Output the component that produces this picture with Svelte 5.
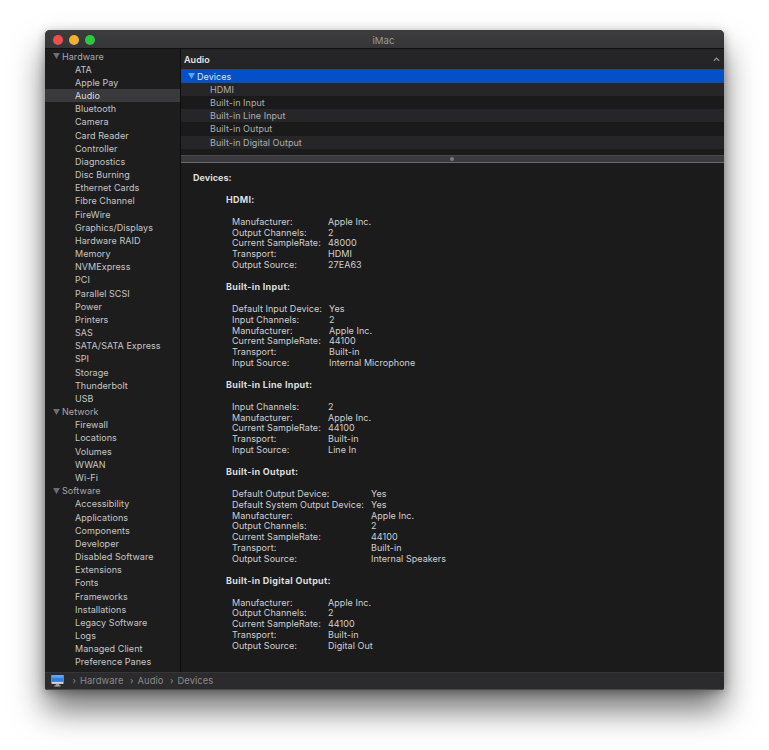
<script lang="ts">
  const sidebar = [
    { title: "Hardware", items: ["ATA", "Apple Pay", "Audio", "Bluetooth", "Camera", "Card Reader", "Controller", "Diagnostics", "Disc Burning", "Ethernet Cards", "Fibre Channel", "FireWire", "Graphics/Displays", "Hardware RAID", "Memory", "NVMExpress", "PCI", "Parallel SCSI", "Power", "Printers", "SAS", "SATA/SATA Express", "SPI", "Storage", "Thunderbolt", "USB"] },
    { title: "Network", items: ["Firewall", "Locations", "Volumes", "WWAN", "Wi-Fi"] },
    { title: "Software", items: ["Accessibility", "Applications", "Components", "Developer", "Disabled Software", "Extensions", "Fonts", "Frameworks", "Installations", "Legacy Software", "Logs", "Managed Client", "Preference Panes", "Printer Software"] }
  ];

  const devices = ["HDMI", "Built-in Input", "Built-in Line Input", "Built-in Output", "Built-in Digital Output"];

  const details = [
    { name: "HDMI", col: "col-a", rows: [["Manufacturer", "Apple Inc."], ["Output Channels", "2"], ["Current SampleRate", "48000"], ["Transport", "HDMI"], ["Output Source", "27EA63"]] },
    { name: "Built-in Input", col: "col-b", rows: [["Default Input Device", "Yes"], ["Input Channels", "2"], ["Manufacturer", "Apple Inc."], ["Current SampleRate", "44100"], ["Transport", "Built-in"], ["Input Source", "Internal Microphone"]] },
    { name: "Built-in Line Input", col: "col-a", rows: [["Input Channels", "2"], ["Manufacturer", "Apple Inc."], ["Current SampleRate", "44100"], ["Transport", "Built-in"], ["Input Source", "Line In"]] },
    { name: "Built-in Output", col: "col-c", rows: [["Default Output Device", "Yes"], ["Default System Output Device", "Yes"], ["Manufacturer", "Apple Inc."], ["Output Channels", "2"], ["Current SampleRate", "44100"], ["Transport", "Built-in"], ["Output Source", "Internal Speakers"]] },
    { name: "Built-in Digital Output", col: "col-a", rows: [["Manufacturer", "Apple Inc."], ["Output Channels", "2"], ["Current SampleRate", "44100"], ["Transport", "Built-in"], ["Output Source", "Digital Out"]] }
  ];
</script>

<div class="page">
  <div class="window">
    <div class="titlebar">
      <div class="lights">
        <span class="light red"></span>
        <span class="light yellow"></span>
        <span class="light green"></span>
      </div>
      <span class="title">iMac</span>
    </div>

    <div class="body">
      <nav class="sidebar">
        {#each sidebar as group}
          <div class="group-row">
            <svg class="tri" viewBox="0 0 8 7"><path d="M0 0h8L4 7z" fill="#6f6f6f" /></svg>
            {group.title}
          </div>
          {#each group.items as item}
            <div class="item" class:selected={item === "Audio"}>{item}</div>
          {/each}
        {/each}
      </nav>

      <main class="content">
        <div class="header">
          <span>Audio</span>
          <svg class="chevron" viewBox="0 0 8 5"><path d="M1 4l3-3 3 3" fill="none" stroke="#9a9a9a" stroke-width="1.4" /></svg>
        </div>

        <div class="tree">
          <div class="tree-head">
            <svg class="tri-blue" viewBox="0 0 8 7"><path d="M0 0h8L4 7z" fill="#5aa6f5" /></svg>
            Devices
          </div>
          {#each devices as device, i}
            <div class="tree-row" class:odd={i % 2 === 1}>{device}</div>
          {/each}
        </div>

        <div class="splitter"><span class="dot"></span></div>

        <div class="detail">
          <div class="detail-title">Devices:</div>
          {#each details as section}
            <section class="section">
              <div class="section-name">{section.name}:</div>
              <div class="kv {section.col}">
                {#each section.rows as row}
                  <span>{row[0]}:</span>
                  <span>{row[1]}</span>
                {/each}
              </div>
            </section>
          {/each}
        </div>
      </main>
    </div>

    <footer class="statusbar">
      <svg class="imac" viewBox="0 0 14 13">
        <rect x="0.5" y="0" width="13" height="9.6" fill="#d9dbde" />
        <rect x="1" y="0.5" width="12" height="7" fill="#2f7fe0" />
        <rect x="1" y="0.5" width="12" height="2.5" fill="#5ba3ee" />
        <rect x="5" y="9.6" width="4" height="2" fill="#9a9ca0" />
        <rect x="3.6" y="11.4" width="6.8" height="1" fill="#c9cbce" />
      </svg>
      <span class="sep">›</span><span>Hardware</span>
      <span class="sep">›</span><span>Audio</span>
      <span class="sep">›</span><span>Devices</span>
    </footer>
  </div>
</div>

<style>
  :global(body) {
    margin: 0;
    background: #fff;
  }
  .page {
    height: 750px;
    padding: 30px 45px 0;
    box-sizing: border-box;
    overflow: hidden;
    font-family: Inter, "Liberation Sans", sans-serif;
    font-size: 9px;
    letter-spacing: 0.05px;
  }
  .window {
    width: 679px;
    height: 660px;
    display: flex;
    flex-direction: column;
    background: #1b1b1c;
    border-radius: 5px 5px 3px 3px;
    box-shadow: 0 0 0 1px rgba(90, 90, 90, 0.7) inset, 0 20px 32px rgba(0, 0, 0, 0.55), 0 2px 10px rgba(0, 0, 0, 0.3);
    overflow: hidden;
  }
  .titlebar {
    height: 18px;
    flex: none;
    display: flex;
    align-items: center;
    justify-content: center;
    position: relative;
    background: linear-gradient(#3d3d3f, #353537);
    border-bottom: 1px solid #111;
  }
  .lights {
    position: absolute;
    left: 7.5px;
    top: 5px;
    display: flex;
    gap: 6.3px;
  }
  .light {
    width: 10px;
    height: 10px;
    border-radius: 50%;
  }
  .red { background: #ee4f4c; }
  .yellow { background: #f2b02f; }
  .green { background: #2ec840; }
  .title {
    font-size: 9.6px;
    color: #9a9a9a;
    padding: 2px 2px 0 0;
  }
  .body {
    flex: 1;
    min-height: 0;
    display: flex;
  }
  .sidebar {
    width: 135px;
    flex: none;
    overflow: hidden;
    background: #1d1d1e;
    border-right: 1px solid #0c0c0c;
    padding-top: 0.5px;
  }
  .group-row, .item {
    height: 13.18px;
    line-height: 13.18px;
    white-space: nowrap;
    color: #b9b9b9;
  }
  .group-row {
    display: flex;
    align-items: center;
    gap: 2px;
    padding-left: 8px;
    color: #a8a8a8;
  }
  .tri {
    width: 7px;
    height: 6px;
  }
  .item {
    padding-left: 30px;
    color: #c6c6c6;
  }
  .item.selected {
    background: #3a3a3c;
    color: #dcdcdc;
  }
  .content {
    flex: 1;
    min-width: 0;
    display: flex;
    flex-direction: column;
    background: #1b1b1c;
  }
  .header {
    height: 20px;
    flex: none;
    display: flex;
    align-items: center;
    justify-content: space-between;
    padding: 0 4px 0 3px;
    background: #252527;
    border-bottom: 1px solid #404042;
    color: #e6e6e6;
    font-weight: 600;
  }
  .chevron {
    width: 7px;
    height: 5px;
  }
  .tree {
    height: 85px;
    flex: none;
    background: #1b1b1c;
    color: #aeaeae;
  }
  .tree-head, .tree-row {
    height: 13.3px;
    line-height: 13.3px;
    white-space: nowrap;
  }
  .tree-head {
    display: flex;
    align-items: center;
    gap: 2px;
    padding-left: 7px;
    background: #0450c8;
    color: #dbe6f7;
    height: 12.6px;
  }
  .tri-blue {
    width: 7px;
    height: 6px;
  }
  .tree-row {
    padding-left: 29px;
    background: #262628;
  }
  .tree-row.odd {
    background: #1a1a1b;
  }
  .splitter {
    height: 6px;
    flex: none;
    display: flex;
    align-items: center;
    justify-content: center;
    background: #3a3a3c;
    border-top: 1px solid #4a4a4c;
    border-bottom: 1px solid #6a6a6c;
  }
  .dot {
    width: 4px;
    height: 4px;
    border-radius: 50%;
    background: #7a7a7c;
    margin-right: 2px;
  }
  .detail {
    flex: 1;
    min-height: 0;
    overflow: hidden;
    padding: 9.5px 0 0 12px;
    color: #d0d0d0;
    line-height: 10.8px;
  }
  .detail-title {
    font-weight: 700;
    color: #dedede;
    margin-bottom: 12px;
  }
  .section {
    padding-left: 33px;
    margin-bottom: 11.5px;
  }
  .section-name {
    font-weight: 700;
    color: #dedede;
    letter-spacing: 0.3px;
    margin-bottom: 10.8px;
  }
  .kv {
    display: grid;
    padding-left: 6px;
  }
  .kv span {
    white-space: nowrap;
  }
  .col-a { grid-template-columns: 96px 1fr; }
  .col-b { grid-template-columns: 97px 1fr; }
  .col-c { grid-template-columns: 139px 1fr; }
  .statusbar {
    height: 18px;
    flex: none;
    display: flex;
    align-items: center;
    gap: 4px;
    padding: 0 0 1px 6px;
    box-sizing: border-box;
    background: #2b2b2d;
    border-top: 1px solid #363638;
    border-bottom: 1px solid #4a4a4c;
    color: #8a8a8a;
    font-size: 9.4px;
  }
  .imac {
    width: 13px;
    height: 12px;
    margin-right: 2px;
  }
  .sep {
    margin-left: 2.5px;
    font-size: 9px;
  }
</style>
